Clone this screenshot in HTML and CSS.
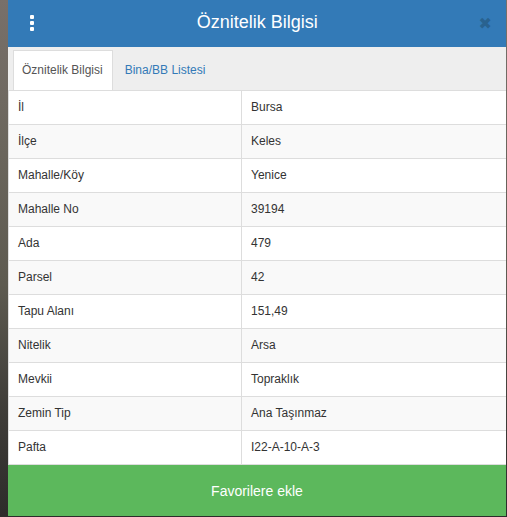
FILE: index.html
```html
<!DOCTYPE html>
<html lang="tr">
<head>
  <meta charset="UTF-8">
  <title>Öznitelik Bilgisi</title>
  <link rel="stylesheet" href="styles.css">
</head>
<body>
  <div class="modal">
    <div class="modal-header">
      <span class="kebab"><i></i><i></i><i></i></span>
      <h4 class="baslik">Öznitelik Bilgisi</h4>
      <span class="kapat">&#10006;</span>
    </div>
    <ul class="sekmeler">
      <li class="aktif">Öznitelik Bilgisi</li>
      <li>Bina/BB Listesi</li>
    </ul>
    <table class="tablo">
      <tr><td>İl</td><td>Bursa</td></tr>
      <tr><td>İlçe</td><td>Keles</td></tr>
      <tr><td>Mahalle/Köy</td><td>Yenice</td></tr>
      <tr><td>Mahalle No</td><td>39194</td></tr>
      <tr><td>Ada</td><td>479</td></tr>
      <tr><td>Parsel</td><td>42</td></tr>
      <tr><td>Tapu Alanı</td><td>151,49</td></tr>
      <tr><td>Nitelik</td><td>Arsa</td></tr>
      <tr><td>Mevkii</td><td>Topraklık</td></tr>
      <tr><td>Zemin Tip</td><td>Ana Taşınmaz</td></tr>
      <tr><td>Pafta</td><td>I22-A-10-A-3</td></tr>
    </table>
    <button type="button" class="favori">Favorilere ekle</button>
  </div>
</body>
</html>
```

FILE: styles.css
```css
body {
  margin: 0;
  height: 517px;
  overflow: hidden;
  font-family: "Liberation Sans", Arial, sans-serif;
  background: linear-gradient(180deg, #78706a 0%, #6a655c 30%, #5d5a50 55%, #3e3c38 80%, #2d2b2a 100%);
}
.modal {
  width: 498px;
  margin-left: 8px;
  background-color: #fff;
}
.modal-header {
  height: 47px;
  background-color: #337ab7;
  display: flex;
  align-items: center;
  padding: 0 14px 0 22px;
  box-sizing: border-box;
}
.kebab {
  width: 6px;
  display: flex;
  flex-direction: column;
  gap: 2px;
  margin-top: -2px;
}
.kebab i {
  width: 4px;
  height: 4px;
  border-radius: 1px;
  background-color: #fff;
}
.baslik {
  flex: 1;
  margin: 0;
  text-align: center;
  color: #fff;
  font-size: 18px;
  font-weight: normal;
  margin-top: -2px;
}
.kapat {
  color: #29628f;
  font-size: 16px;
  font-weight: bold;
  margin-top: -1px;
  font-family: "DejaVu Sans", sans-serif;
}
.sekmeler {
  list-style: none;
  margin: 0;
  padding: 3px 0 0 5px;
  background-color: #eee;
  display: flex;
  height: 43px;
  box-sizing: border-box;
}
.sekmeler li {
  padding: 0 10px 0 11px;
  line-height: 39px;
  font-size: 12px;
  color: #337ab7;
  border: 1px solid transparent;
  border-bottom: none;
}
.sekmeler li.aktif {
  background-color: #fff;
  color: #555;
  border-color: #ddd;
  padding: 0 9px 0 8px;
}
.tablo {
  width: 100%;
  border-collapse: collapse;
  font-size: 12px;
  color: #333;
  border-bottom: 1px solid #ddd;
}
.tablo td {
  border-top: 1px solid #ddd;
  border-left: 1px solid #ddd;
  padding: 8px 9px;
  line-height: 17px;
}
.tablo td:first-child {
  width: 214px;
}
.tablo tr:nth-child(even) td {
  background-color: #f9f9f9;
}
.favori {
  display: block;
  width: 100%;
  height: 51px;
  border: none;
  background-color: #5cb85c;
  color: #fff;
  font-family: "Liberation Sans", Arial, sans-serif;
  font-size: 14px;
}
```
